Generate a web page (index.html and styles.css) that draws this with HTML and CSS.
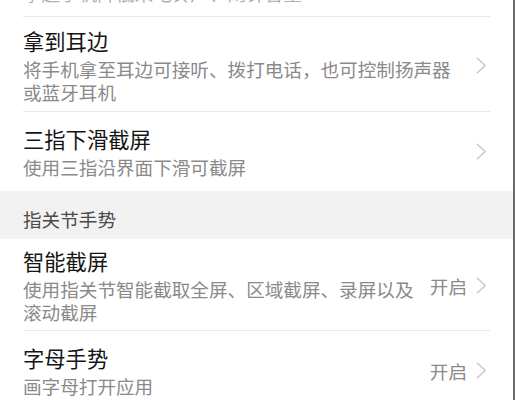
FILE: index.html
```html
<!DOCTYPE html>
<html lang="zh-CN">
<head>
<meta charset="utf-8">
<link rel="stylesheet" href="styles.css">
</head>
<body>
<div class="page">
  <div class="list">
    <div class="row multi top">
      <div class="text">
        <div class="title">拿起手机</div>
        <div class="sub">拿起手机降低来电铃声、闹钟音量</div>
      </div>
    </div>
    <div class="row multi">
      <div class="text">
        <div class="title">拿到耳边</div>
        <div class="sub">将手机拿至耳边可接听、拨打电话，也可控制扬声器或蓝牙耳机</div>
      </div>
      <svg class="chev" viewBox="0 0 10 17" width="10" height="17"><path d="M0.8 0.8 L9.2 8.5 L0.8 16.2" fill="none" stroke="#c6c6c6" stroke-width="1.3"/></svg>
    </div>
    <div class="row single last">
      <div class="text">
        <div class="title">三指下滑截屏</div>
        <div class="sub">使用三指沿界面下滑可截屏</div>
      </div>
      <svg class="chev" viewBox="0 0 10 17" width="10" height="17"><path d="M0.8 0.8 L9.2 8.5 L0.8 16.2" fill="none" stroke="#c6c6c6" stroke-width="1.3"/></svg>
    </div>
  </div>
  <div class="section">指关节手势</div>
  <div class="list">
    <div class="row multi tight">
      <div class="text">
        <div class="title">智能截屏</div>
        <div class="sub">使用指关节智能截取全屏、区域截屏、录屏以及滚动截屏</div>
      </div>
      <span class="value">开启</span>
      <svg class="chev" viewBox="0 0 10 17" width="10" height="17"><path d="M0.8 0.8 L9.2 8.5 L0.8 16.2" fill="none" stroke="#c6c6c6" stroke-width="1.3"/></svg>
    </div>
    <div class="row single">
      <div class="text">
        <div class="title">字母手势</div>
        <div class="sub">画字母打开应用</div>
      </div>
      <span class="value">开启</span>
      <svg class="chev" viewBox="0 0 10 17" width="10" height="17"><path d="M0.8 0.8 L9.2 8.5 L0.8 16.2" fill="none" stroke="#c6c6c6" stroke-width="1.3"/></svg>
    </div>
  </div>
</div>
</body>
</html>
```
FILE: styles.css
```css
html, body {
  margin: 0;
  padding: 0;
  background: #ffffff;
}
body {
  font-family: "Noto Sans CJK SC", "Noto Sans", sans-serif;
  overflow: hidden;
  height: 400px;
}
.page {
  height: 400px;
  border-right: 2px solid #6a6a6a;
  overflow: hidden;
  box-sizing: border-box;
}
.list:first-child {
  margin-top: -59px;
}
.row {
  display: flex;
  align-items: center;
  margin: 0 23px;
  border-bottom: 1px solid #e8e8e8;
  box-sizing: border-box;
}
.row.last {
  border-bottom: none;
}
.row.multi {
  padding: 10px 0 8px;
}
.row.multi.top {
  padding-bottom: 12px;
}
.row.multi.tight {
  padding: 8px 0 7px;
}
.row.single {
  min-height: 79px;
  padding: 12px 0;
}
.text {
  flex: 1;
  min-width: 0;
  padding-right: 8px;
}
.title {
  font-size: 21.3px;
  line-height: 28px;
  color: #141414;
}
.sub {
  font-size: 18.6px;
  line-height: 23px;
  margin-top: 2px;
  color: #8a8a8a;
}
.top .sub {
  color: #b0b0b0;
}
.value {
  font-size: 18.6px;
  color: #8a8a8a;
  margin-right: 9px;
  white-space: nowrap;
}
.chev {
  flex: none;
  margin-right: 4px;
}
.section {
  background: #f2f2f2;
  height: 48px;
  box-sizing: border-box;
  padding: 16px 23px 0;
  font-size: 18.6px;
  line-height: 23px;
  color: #4a4a4a;
}
```
